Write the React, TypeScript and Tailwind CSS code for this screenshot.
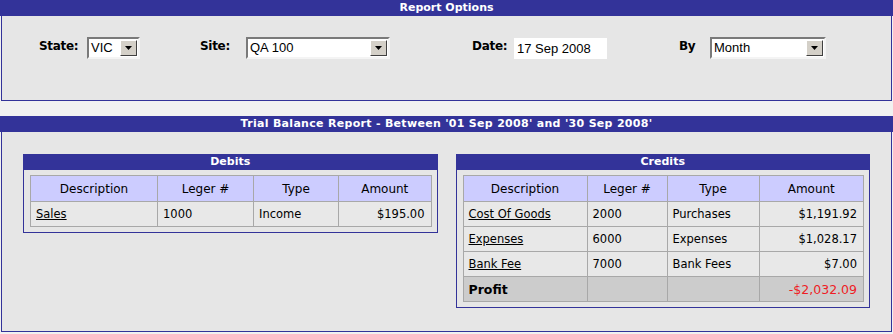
import React from 'react';

type Row = { desc: string; ledger: string; type: string; amount: string };

const debits: Row[] = [{ desc: 'Sales', ledger: '1000', type: 'Income', amount: '$195.00' }];

const credits: Row[] = [
  { desc: 'Cost Of Goods', ledger: '2000', type: 'Purchases', amount: '$1,191.92' },
  { desc: 'Expenses', ledger: '6000', type: 'Expenses', amount: '$1,028.17' },
  { desc: 'Bank Fee', ledger: '7000', type: 'Bank Fees', amount: '$7.00' },
];

const Caret = () => (
  <svg width="7" height="4" viewBox="0 0 7 4">
    <path d="M0 0h7L3.5 4z" fill="#000" />
  </svg>
);

const Select = ({ value, className }: { value: string; className: string }) => (
  <div
    className={`flex h-[22px] border-2 border-t-[#7a7a7a] border-l-[#7a7a7a] border-b-[#f4f4f4] border-r-[#f4f4f4] bg-white ${className}`}
  >
    <span className="flex-1 pl-[2px] font-['Liberation_Sans',Arial,sans-serif] text-[13px] leading-[18px] text-black">
      {value}
    </span>
    <span className="my-px mr-px flex w-[17px] items-center justify-center border border-t-white border-l-white border-b-[#404040] border-r-[#404040] bg-[#d4d0c8]">
      <Caret />
    </span>
  </div>
);

const Label = ({ text, className }: { text: string; className: string }) => (
  <span className={`text-[12px] font-bold leading-[14px] tracking-[-0.3px] text-black ${className}`}>{text}</span>
);

const Bar = ({ title, className = '' }: { title: string; className?: string }) => (
  <div className={`h-[16px] bg-[#333399] text-center text-[11px] font-bold leading-[16px] text-white ${className}`}>
    {title}
  </div>
);

const LedgerBox = ({
  title,
  rows,
  cols,
  profit,
}: {
  title: string;
  rows: Row[];
  cols: string[];
  profit?: string;
}) => (
  <div className="flex-1 border border-[#333399] bg-[#e6e6e6]">
    <div className="h-[15px] bg-[#333399] text-center text-[11px] font-bold leading-[14px] text-white">{title}</div>
    <div className="pb-[5px] pl-[6px] pr-[5px] pt-[5px]">
      <table className="w-full table-fixed border-collapse border border-[#f4f4f4] text-[11.5px] text-black">
        <colgroup>
          <col className={cols[0]} />
          <col className={cols[1]} />
          <col className={cols[2]} />
          <col />
        </colgroup>
        <thead>
          <tr className="h-[26px] bg-[#ccccff]">
            {['Description', 'Leger #', 'Type', 'Amount'].map((h) => (
              <th key={h} className="border border-[#a8a8a8] pt-px text-center text-[12px] font-normal">
                {h}
              </th>
            ))}
          </tr>
        </thead>
        <tbody>
          {rows.map((r) => (
            <tr key={r.desc} className="h-[25px] bg-[#e8e8e8]">
              <td className="border border-[#a8a8a8] px-[5px] pt-[2px]">
                <a href="#" className="text-black underline">
                  {r.desc}
                </a>
              </td>
              <td className="border border-[#a8a8a8] px-[5px] pt-[2px]">{r.ledger}</td>
              <td className="border border-[#a8a8a8] px-[5px] pt-[2px]">{r.type}</td>
              <td className="border border-[#a8a8a8] px-[6px] pt-[2px] text-right">{r.amount}</td>
            </tr>
          ))}
          {profit && (
            <tr className="h-[25px] bg-[#cccccc]">
              <td className="border border-[#a8a8a8] px-[5px] pt-[2px] text-[12.5px] font-bold">Profit</td>
              <td className="border border-[#a8a8a8]"></td>
              <td className="border border-[#a8a8a8]"></td>
              <td className="border border-[#a8a8a8] px-[6px] pt-[2px] text-right text-[12.5px] text-[#ee1c25]">
                {profit}
              </td>
            </tr>
          )}
        </tbody>
      </table>
    </div>
  </div>
);

export default function App() {
  return (
    <div className="h-[334px] w-[893px] overflow-hidden bg-[#f1f1f1] font-['DejaVu_Sans',Verdana,sans-serif]">
      {/* Report options */}
      <Bar title="Report Options" />
      <div className="mx-px flex h-[85px] border-x border-b border-[#333399] bg-[#e6e6e6] pl-[37px] pt-[21px]">
        <div className="flex w-[161px] items-start">
          <Label text="State:" className="w-[48px] pt-[2px]" />
          <Select value="VIC" className="w-[53px]" />
        </div>
        <div className="flex w-[272px] items-start">
          <Label text="Site:" className="w-[46px] pt-[2px]" />
          <Select value="QA 100" className="w-[144px]" />
        </div>
        <div className="flex w-[207px] items-start">
          <Label text="Date:" className="w-[42px] pt-[2px]" />
          <div className="mt-px h-[21px] w-[93px] bg-white pl-[3px] font-['Liberation_Sans',Arial,sans-serif] text-[13px] leading-[21px] text-black">
            17 Sep 2008
          </div>
        </div>
        <div className="flex items-start">
          <Label text="By" className="w-[31px] pt-[2px]" />
          <Select value="Month" className="w-[116px]" />
        </div>
      </div>

      {/* Trial balance */}
      <div className="mt-[15px]">
        <Bar
          title="Trial Balance Report - Between '01 Sep 2008' and '30 Sep 2008'"
          className="tracking-[0.3px]"
        />
        <div className="mx-px flex h-[200px] items-start gap-[18px] border-x border-b border-[#333399] bg-[#e6e6e6] px-[21px] pt-[22px]">
          <LedgerBox title="Debits" rows={debits} cols={['w-[127px]', 'w-[96px]', 'w-[85px]']} />
          <LedgerBox
            title="Credits"
            rows={credits}
            cols={['w-[124px]', 'w-[80px]', 'w-[92px]']}
            profit="-$2,032.09"
          />
        </div>
      </div>
    </div>
  );
}
